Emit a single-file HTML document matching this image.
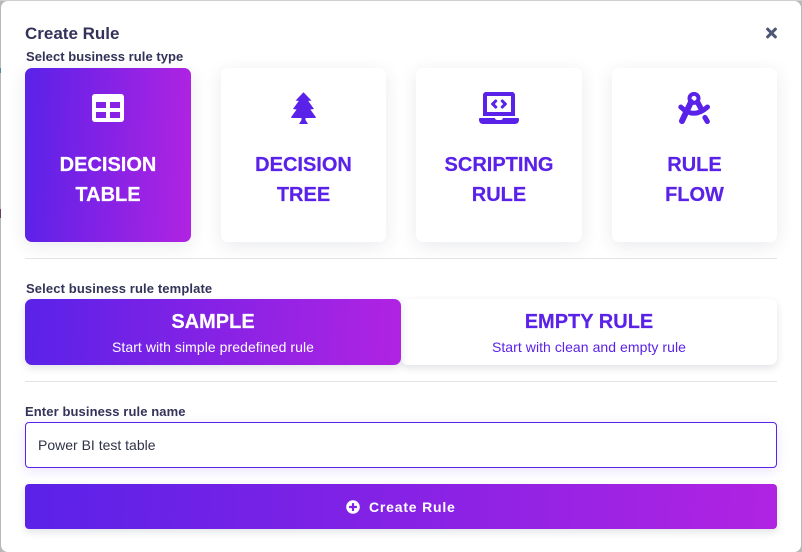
<!DOCTYPE html>
<html>
<head>
<meta charset="utf-8">
<style>
html,body{margin:0;padding:0;width:802px;height:552px;overflow:hidden;background:#b8b8b8;font-family:"Liberation Sans",sans-serif}
*{box-sizing:border-box}
#top{position:absolute;left:0;top:0;width:802px;height:1px;background:#cfcfcf}
#modal{position:absolute;left:1px;top:1px;width:800px;height:551px;background:#fff;border-radius:7px}
.a{position:absolute;white-space:nowrap}
.lbl{font-size:13px;font-weight:700;color:#33335a;line-height:16px;letter-spacing:.05px}
.g{background:linear-gradient(92deg,#5a22e8,#b123e2)}
.card{position:absolute;top:68px;height:174px;border-radius:7px;background:#fff;box-shadow:0 4px 18px rgba(40,50,80,.1);text-align:center;color:#5a22e8;font-size:20px;font-weight:700;line-height:30px;padding-top:82px;-webkit-text-stroke:.2px currentColor}
.card.g{background:linear-gradient(92deg,#5a22e8,#b123e2);color:#fff}
.card svg{position:absolute;top:24px;fill:currentColor}
.tpl{position:absolute;top:299px;height:66px;border-radius:7px;text-align:center;box-shadow:0 3px 8px rgba(40,50,80,.14);color:#5a22e8}
.tpl b{position:absolute;left:0;right:0;top:10px;font-size:20px;line-height:26px;-webkit-text-stroke:.2px currentColor}
.tpl span{position:absolute;left:0;right:0;top:40px;font-size:14px;line-height:16px;letter-spacing:.06px}
.hr{position:absolute;left:25px;width:752px;height:1px;background:#e4e4e4}
</style>
</head>
<body>
<div id="top"></div>
<div class="a" style="left:0;top:68px;width:1px;height:5px;background:#4a86ad"></div>
<div class="a" style="left:0;top:209px;width:1px;height:9px;background:#6a3f70"></div>
<div id="modal"></div>
<div class="a" style="left:25px;top:24px;font-size:17px;font-weight:700;line-height:20px;color:#33335a">Create Rule</div>
<svg class="a" style="left:766px;top:25px" width="11" height="16" viewBox="0 0 352 512" fill="#4c5675"><path d="M242.72 256l100.07-100.07c12.28-12.28 12.28-32.19 0-44.48l-22.24-22.24c-12.28-12.28-32.19-12.28-44.48 0L176 189.28 75.93 89.21c-12.28-12.28-32.19-12.28-44.48 0L9.21 111.45c-12.28 12.28-12.28 32.19 0 44.48L109.28 256 9.21 356.07c-12.28 12.28-12.28 32.19 0 44.48l22.24 22.24c12.28 12.28 32.2 12.28 44.48 0L176 322.72l100.07 100.07c12.28 12.28 32.2 12.28 44.48 0l22.24-22.24c12.28-12.28 12.28-32.19 0-44.48L242.72 256z"/></svg>

<div class="a lbl" style="left:26px;top:49px">Select business rule type</div>

<div class="card g" style="left:25px;width:166px">
<svg style="left:67px" width="32" height="32" viewBox="0 0 512 512"><path d="M464 32H48C21.49 32 0 53.49 0 80v352c0 26.51 21.49 48 48 48h416c26.51 0 48-21.49 48-48V80c0-26.51-21.49-48-48-48zM224 416H64v-96h160v96zm0-160H64v-96h160v96zm224 160H288v-96h160v96zm0-160H288v-96h160v96z"/></svg>
DECISION<br>TABLE</div>

<div class="card" style="left:221px;width:165px">
<svg style="left:70px" width="25" height="32" viewBox="0 0 25 32"><path d="M12.5 0.3 L20.5 8.6 L17.2 8.9 L23 17 L19.4 17.5 L24.8 25 L24.6 26 L14.5 26 L14.5 28 L17 32 L8 32 L10.5 28 L10.5 26 L0.4 26 L0.2 25 L5.6 17.5 L2 17 L7.8 8.9 L4.5 8.6 Z"/></svg>
DECISION<br>TREE</div>

<div class="card" style="left:416px;width:166px">
<svg style="left:63px" width="40" height="32" viewBox="0 0 640 512"><path d="M255.03 261.65c6.25 6.25 16.38 6.25 22.63 0l11.31-11.31c6.25-6.25 6.25-16.38 0-22.63L253.25 192l35.71-35.72c6.25-6.25 6.25-16.38 0-22.63l-11.31-11.31c-6.25-6.25-16.38-6.25-22.63 0l-58.34 58.34c-6.25 6.25-6.25 16.38 0 22.63l58.35 58.34zm96.01-11.3l11.31 11.31c6.25 6.25 16.38 6.25 22.63 0l58.34-58.34c6.25-6.25 6.25-16.38 0-22.63l-58.34-58.34c-6.25-6.25-16.38-6.25-22.63 0l-11.31 11.31c-6.25 6.25-6.25 16.38 0 22.63L386.75 192l-35.71 35.72c-6.25 6.25-6.25 16.38 0 22.63zM624 416H381.54c-.74 19.81-14.71 32-32.74 32H288c-18.69 0-33.02-17.47-32.77-32H16c-8.8 0-16 7.2-16 16v16c0 35.2 28.8 64 64 64h512c35.2 0 64-28.8 64-64v-16c0-8.8-7.2-16-16-16zM576 48c0-26.4-21.6-48-48-48H112C85.6 0 64 21.6 64 48v336h512V48zm-64 272H128V64h384v256z"/></svg>
SCRIPTING<br>RULE</div>

<div class="card" style="left:612px;width:165px">
<svg style="left:66px;fill:none;stroke:currentColor" width="32" height="32" viewBox="0 0 32 32" stroke-linecap="round"><circle cx="16" cy="6.4" r="4.5" stroke-width="4"/><path d="M13 10 L4 29" stroke-width="6"/><path d="M19.5 10 L24 18.5" stroke-width="5.5"/><path d="M27 25.5 L29.3 29.5" stroke-width="5.2"/><path d="M2.8 15 Q15.5 27.5 29.5 15" stroke-width="5"/></svg>
RULE<br>FLOW</div>

<div class="hr" style="top:258px"></div>

<div class="a lbl" style="left:26px;top:281px;letter-spacing:.12px">Select business rule template</div>

<div class="tpl" style="left:401px;width:376px;background:#fff"><b>EMPTY RULE</b><span>Start with clean and empty rule</span></div>
<div class="tpl g" style="left:25px;width:376px;color:#fff"><b>SAMPLE</b><span>Start with simple predefined rule</span></div>

<div class="hr" style="top:381px"></div>

<div class="a lbl" style="left:25px;top:404px;letter-spacing:.1px">Enter business rule name</div>
<div class="a" style="left:25px;top:422px;width:752px;height:46px;border:1px solid #5a22e8;border-radius:4px;background:#fff;box-shadow:0 3px 12px rgba(90,34,232,.12);font-size:14px;line-height:44px;padding-left:12px;color:#2f3347">Power BI test table</div>

<div class="a g" style="left:25px;top:484px;width:752px;height:45px;border-radius:4px;box-shadow:0 3px 8px rgba(40,50,80,.14)"></div>
<svg class="a" style="left:346px;top:500px" width="14" height="14" viewBox="0 0 512 512" fill="#fff"><path d="M256 8C119 8 8 119 8 256s111 248 248 248 248-111 248-248S393 8 256 8zm144 276c0 6.6-5.4 12-12 12h-92v92c0 6.6-5.4 12-12 12h-56c-6.6 0-12-5.4-12-12v-92h-92c-6.6 0-12-5.4-12-12v-56c0-6.6 5.4-12 12-12h92v-92c0-6.6 5.4-12 12-12h56c6.6 0 12 5.4 12 12v92h92c6.6 0 12 5.4 12 12v56z"/></svg>
<div class="a" style="left:369px;top:499px;font-size:14px;font-weight:700;line-height:16px;letter-spacing:.8px;color:#fff">Create Rule</div>
</body>
</html>
